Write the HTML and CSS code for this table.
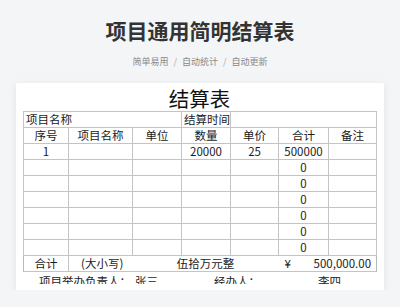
FILE: index.html
```html
<!DOCTYPE html>
<html lang="zh-CN">
<head>
    <meta charset="UTF-8">
    <meta name="viewport" content="width=device-width, initial-scale=1.0">
    <title>项目通用简明结算表</title>
    <link rel="stylesheet" href="styles.css">
</head>
<body>

<div class="header">
    <h1>项目通用简明结算表</h1>
    <p class="tags">简单易用 <span class="sep">/</span> 自动统计 <span class="sep">/</span> 自动更新</p>
</div>

<div class="sheet">
    <div class="sheet-title">结算表</div>
    <table class="grid">
        <colgroup>
            <col style="width:45px">
            <col style="width:64px">
            <col style="width:49px">
            <col style="width:49px">
            <col style="width:48px">
            <col style="width:50px">
            <col style="width:48px">
        </colgroup>
        <tr>
            <td colspan="3" class="left">项目名称</td>
            <td class="left">结算时间</td>
            <td colspan="3"></td>
        </tr>
        <tr>
            <td>序号</td>
            <td>项目名称</td>
            <td>单位</td>
            <td>数量</td>
            <td>单价</td>
            <td>合计</td>
            <td>备注</td>
        </tr>
        <tr><td>1</td><td></td><td></td><td>20000</td><td>25</td><td>500000</td><td></td></tr>
        <tr><td></td><td></td><td></td><td></td><td></td><td>0</td><td></td></tr>
        <tr><td></td><td></td><td></td><td></td><td></td><td>0</td><td></td></tr>
        <tr><td></td><td></td><td></td><td></td><td></td><td>0</td><td></td></tr>
        <tr><td></td><td></td><td></td><td></td><td></td><td>0</td><td></td></tr>
        <tr><td></td><td></td><td></td><td></td><td></td><td>0</td><td></td></tr>
        <tr><td></td><td></td><td></td><td></td><td></td><td>0</td><td></td></tr>
        <tr class="total">
            <td>合计</td>
            <td class="left case">(大小写)</td>
            <td colspan="3">伍拾万元整</td>
            <td colspan="2">
                <div class="amount"><span>¥</span><span>500,000.00</span></div>
            </td>
        </tr>
    </table>
    <div class="sign">
        <span>项目举办负责人：</span>
        <span>张三</span>
        <span>经办人：</span>
        <span>李四</span>
    </div>
</div>

</body>
</html>
```

FILE: styles.css
```css
body {
    margin: 0;
    background-color: #f4f5f7;
    font-family: "Noto Sans CJK SC", "Noto Sans", sans-serif;
    color: #222;
}
.header {
    text-align: center;
    padding-top: 15px;
}
.header h1 {
    margin: 0;
    font-size: 21px;
    line-height: 30px;
    font-weight: bold;
    color: #333;
}
.tags {
    margin: 10px 0 0;
    font-size: 9px;
    line-height: 14px;
    color: #888;
}
.tags .sep {
    margin: 0 3px;
    color: #aaa;
}
.sheet {
    margin: 14px 16px 0;
    height: 207px;
    overflow: hidden;
    background: #ffffff;
    padding: 2px 8px 0 7px;
    box-sizing: border-box;
    box-shadow: 0 2px 8px rgba(0, 0, 0, 0.08);
}
.sheet-title {
    text-align: center;
    font-size: 20.5px;
    line-height: 26px;
    color: #111;
}
.grid {
    width: 353px;
    border-collapse: collapse;
    table-layout: fixed;
    border: 1px solid #b8b8b8;
    font-size: 11.5px;
    color: #1a1a1a;
}
.grid td {
    height: 15px;
    padding: 0;
    border: 1px solid #c4c4c4;
    text-align: center;
    line-height: 15px;
    white-space: nowrap;
    overflow: visible;
}
.grid td.left {
    text-align: left;
    padding-left: 2px;
}
.grid .total td {
    border-left: none;
    border-right: none;
}
.grid .total td:first-child {
    border-right: 1px solid #c4c4c4;
}
.grid td.case {
    padding-left: 12px;
}
.amount {
    display: flex;
    justify-content: space-between;
    padding: 0 5px 0 6px;
}
.sign {
    display: grid;
    grid-template-columns: 96px 79px 104px auto;
    margin-top: 1px;
    height: 11px;
    overflow: hidden;
    padding-left: 16px;
    font-size: 11.5px;
    line-height: 16px;
    color: #222;
}
```
